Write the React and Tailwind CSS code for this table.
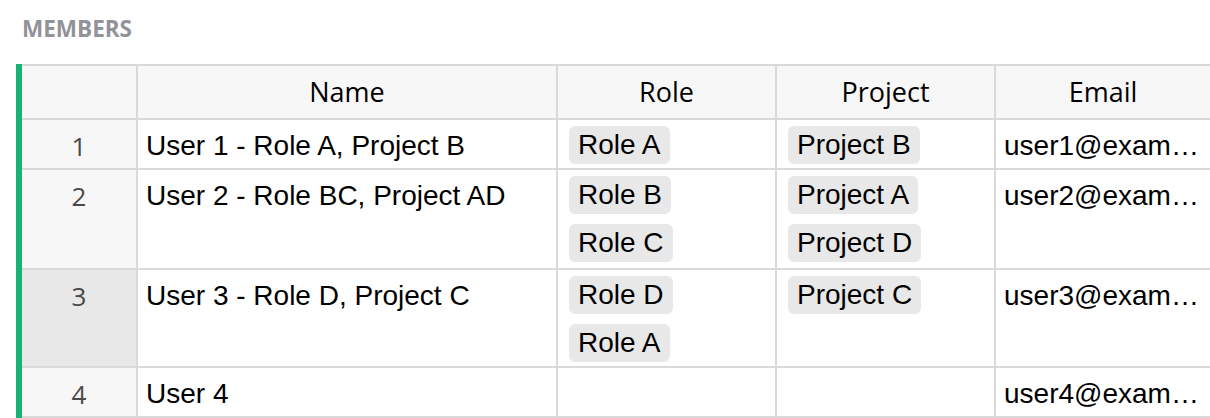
import React from 'react';

const rows = [
  { id: 1, name: 'User 1 - Role A, Project B', roles: ['Role A'], projects: ['Project B'], email: 'user1@example.com', h: 'h-[50px]' },
  { id: 2, name: 'User 2 - Role BC, Project AD', roles: ['Role B', 'Role C'], projects: ['Project A', 'Project D'], email: 'user2@example.com', h: 'h-[100px]' },
  { id: 3, name: 'User 3 - Role D, Project C', roles: ['Role D', 'Role A'], projects: ['Project C'], email: 'user3@example.com', h: 'h-[98px]', active: true },
  { id: 4, name: 'User 4', roles: [], projects: [], email: 'user4@example.com', h: 'h-[50px]' },
];

const uiFont = "font-['Open_Sans',sans-serif]";
const cellFont = "font-['Liberation_Sans',Arial,sans-serif]";

const Chips = ({ items }) => (
  <div className="flex flex-col items-start gap-[10px] pl-[11px] pt-[6px]">
    {items.map(item => (
      <span
        key={item}
        className={`${cellFont} h-[38px] rounded-[6px] bg-[#e8e8e8] px-[9px] text-[28px] leading-[38px] text-black whitespace-nowrap`}
      >
        {item}
      </span>
    ))}
  </div>
);

const App = () => {
  return (
    <div className="h-[418px] w-[1210px] overflow-hidden bg-white">
      {/* Section title */}
      <div className={`${uiFont} pl-[22px] pt-[14px] mb-[20px] text-[22.5px] font-bold leading-[30px] text-[#929299]`}>
        MEMBERS
      </div>

      {/* Grid */}
      <div className="ml-4 border-l-[6px] border-[#16b378]">
        {/* Header */}
        <div className={`${uiFont} flex h-[56px] border-y-2 border-[#d9d9d9] bg-[#f7f7f7] text-[27px] text-black`}>
          <div className="w-[116px] shrink-0 border-r-2 border-[#d9d9d9]" />
          <div className="flex w-[420px] shrink-0 items-center justify-center border-r-2 border-[#d9d9d9]">Name</div>
          <div className="flex w-[219px] shrink-0 items-center justify-center border-r-2 border-[#d9d9d9]">Role</div>
          <div className="flex w-[219px] shrink-0 items-center justify-center border-r-2 border-[#d9d9d9]">Project</div>
          <div className="flex w-[214px] shrink-0 items-center justify-center">Email</div>
        </div>

        {/* Rows */}
        {rows.map(row => (
          <div key={row.id} className={`flex ${row.h} border-b-2 border-[#d9d9d9]`}>
            <div
              className={`${uiFont} w-[116px] shrink-0 border-r-2 border-[#d9d9d9] pt-[7px] text-center text-[26px] leading-[38px] text-[#494949] ${
                row.active ? 'bg-[#e8e8e8]' : 'bg-[#f7f7f7]'
              }`}
            >
              {row.id}
            </div>
            <div className={`${cellFont} w-[420px] shrink-0 border-r-2 border-[#d9d9d9] px-2 pt-[7px] text-[28px] leading-[38px] text-black`}>
              {row.name}
            </div>
            <div className="w-[219px] shrink-0 border-r-2 border-[#d9d9d9]">
              <Chips items={row.roles} />
            </div>
            <div className="w-[219px] shrink-0 border-r-2 border-[#d9d9d9]">
              <Chips items={row.projects} />
            </div>
            <div className={`${cellFont} w-[214px] shrink-0 truncate pl-2 pr-[8px] pt-[7px] text-[28px] leading-[38px] text-black`}>
              {row.email}
            </div>
          </div>
        ))}
      </div>
    </div>
  );
};

export default App;
